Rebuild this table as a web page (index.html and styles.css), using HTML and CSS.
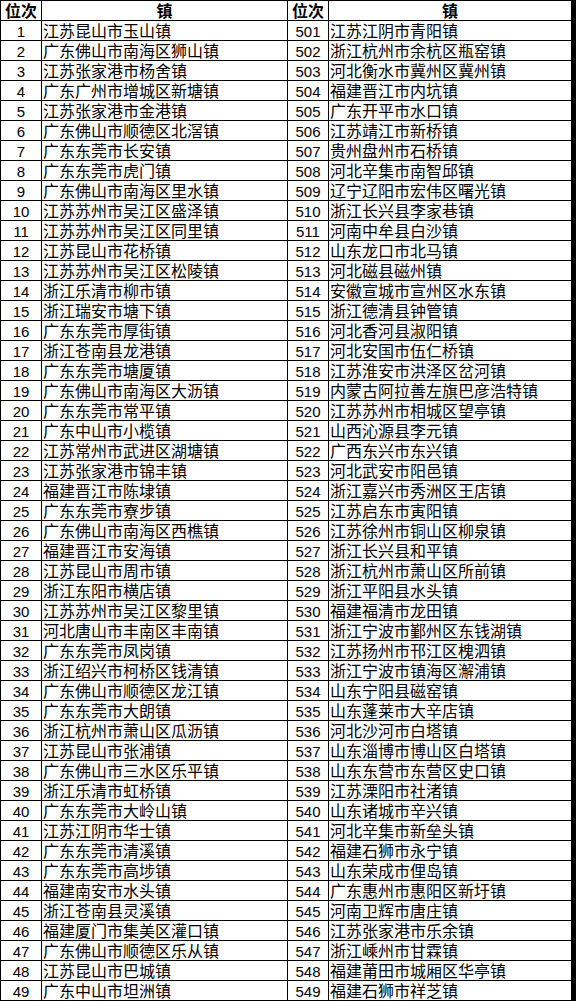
FILE: index.html
```html
<!DOCTYPE html>
<html lang="zh-CN">
<head>
<meta charset="utf-8">
<title>位次 镇</title>
<link rel="stylesheet" href="styles.css">
</head>
<body>
<div class="page">
<div class="sheet">
<div class="hd">位次</div><div class="hd">镇</div><div class="hd">位次</div><div class="hd">镇</div>
<div class="no">1</div><div class="tw">江苏昆山市玉山镇</div><div class="no">501</div><div class="tw">江苏江阴市青阳镇</div>
<div class="no">2</div><div class="tw">广东佛山市南海区狮山镇</div><div class="no">502</div><div class="tw">浙江杭州市余杭区瓶窑镇</div>
<div class="no">3</div><div class="tw">江苏张家港市杨舍镇</div><div class="no">503</div><div class="tw">河北衡水市冀州区冀州镇</div>
<div class="no">4</div><div class="tw">广东广州市增城区新塘镇</div><div class="no">504</div><div class="tw">福建晋江市内坑镇</div>
<div class="no">5</div><div class="tw">江苏张家港市金港镇</div><div class="no">505</div><div class="tw">广东开平市水口镇</div>
<div class="no">6</div><div class="tw">广东佛山市顺德区北滘镇</div><div class="no">506</div><div class="tw">江苏靖江市新桥镇</div>
<div class="no">7</div><div class="tw">广东东莞市长安镇</div><div class="no">507</div><div class="tw">贵州盘州市石桥镇</div>
<div class="no">8</div><div class="tw">广东东莞市虎门镇</div><div class="no">508</div><div class="tw">河北辛集市南智邱镇</div>
<div class="no">9</div><div class="tw">广东佛山市南海区里水镇</div><div class="no">509</div><div class="tw">辽宁辽阳市宏伟区曙光镇</div>
<div class="no">10</div><div class="tw">江苏苏州市吴江区盛泽镇</div><div class="no">510</div><div class="tw">浙江长兴县李家巷镇</div>
<div class="no">11</div><div class="tw">江苏苏州市吴江区同里镇</div><div class="no">511</div><div class="tw">河南中牟县白沙镇</div>
<div class="no">12</div><div class="tw">江苏昆山市花桥镇</div><div class="no">512</div><div class="tw">山东龙口市北马镇</div>
<div class="no">13</div><div class="tw">江苏苏州市吴江区松陵镇</div><div class="no">513</div><div class="tw">河北磁县磁州镇</div>
<div class="no">14</div><div class="tw">浙江乐清市柳市镇</div><div class="no">514</div><div class="tw">安徽宣城市宣州区水东镇</div>
<div class="no">15</div><div class="tw">浙江瑞安市塘下镇</div><div class="no">515</div><div class="tw">浙江德清县钟管镇</div>
<div class="no">16</div><div class="tw">广东东莞市厚街镇</div><div class="no">516</div><div class="tw">河北香河县淑阳镇</div>
<div class="no">17</div><div class="tw">浙江苍南县龙港镇</div><div class="no">517</div><div class="tw">河北安国市伍仁桥镇</div>
<div class="no">18</div><div class="tw">广东东莞市塘厦镇</div><div class="no">518</div><div class="tw">江苏淮安市洪泽区岔河镇</div>
<div class="no">19</div><div class="tw">广东佛山市南海区大沥镇</div><div class="no">519</div><div class="tw">内蒙古阿拉善左旗巴彦浩特镇</div>
<div class="no">20</div><div class="tw">广东东莞市常平镇</div><div class="no">520</div><div class="tw">江苏苏州市相城区望亭镇</div>
<div class="no">21</div><div class="tw">广东中山市小榄镇</div><div class="no">521</div><div class="tw">山西沁源县李元镇</div>
<div class="no">22</div><div class="tw">江苏常州市武进区湖塘镇</div><div class="no">522</div><div class="tw">广西东兴市东兴镇</div>
<div class="no">23</div><div class="tw">江苏张家港市锦丰镇</div><div class="no">523</div><div class="tw">河北武安市阳邑镇</div>
<div class="no">24</div><div class="tw">福建晋江市陈埭镇</div><div class="no">524</div><div class="tw">浙江嘉兴市秀洲区王店镇</div>
<div class="no">25</div><div class="tw">广东东莞市寮步镇</div><div class="no">525</div><div class="tw">江苏启东市寅阳镇</div>
<div class="no">26</div><div class="tw">广东佛山市南海区西樵镇</div><div class="no">526</div><div class="tw">江苏徐州市铜山区柳泉镇</div>
<div class="no">27</div><div class="tw">福建晋江市安海镇</div><div class="no">527</div><div class="tw">浙江长兴县和平镇</div>
<div class="no">28</div><div class="tw">江苏昆山市周市镇</div><div class="no">528</div><div class="tw">浙江杭州市萧山区所前镇</div>
<div class="no">29</div><div class="tw">浙江东阳市横店镇</div><div class="no">529</div><div class="tw">浙江平阳县水头镇</div>
<div class="no">30</div><div class="tw">江苏苏州市吴江区黎里镇</div><div class="no">530</div><div class="tw">福建福清市龙田镇</div>
<div class="no">31</div><div class="tw">河北唐山市丰南区丰南镇</div><div class="no">531</div><div class="tw">浙江宁波市鄞州区东钱湖镇</div>
<div class="no">32</div><div class="tw">广东东莞市凤岗镇</div><div class="no">532</div><div class="tw">江苏扬州市邗江区槐泗镇</div>
<div class="no">33</div><div class="tw">浙江绍兴市柯桥区钱清镇</div><div class="no">533</div><div class="tw">浙江宁波市镇海区澥浦镇</div>
<div class="no">34</div><div class="tw">广东佛山市顺德区龙江镇</div><div class="no">534</div><div class="tw">山东宁阳县磁窑镇</div>
<div class="no">35</div><div class="tw">广东东莞市大朗镇</div><div class="no">535</div><div class="tw">山东蓬莱市大辛店镇</div>
<div class="no">36</div><div class="tw">浙江杭州市萧山区瓜沥镇</div><div class="no">536</div><div class="tw">河北沙河市白塔镇</div>
<div class="no">37</div><div class="tw">江苏昆山市张浦镇</div><div class="no">537</div><div class="tw">山东淄博市博山区白塔镇</div>
<div class="no">38</div><div class="tw">广东佛山市三水区乐平镇</div><div class="no">538</div><div class="tw">山东东营市东营区史口镇</div>
<div class="no">39</div><div class="tw">浙江乐清市虹桥镇</div><div class="no">539</div><div class="tw">江苏溧阳市社渚镇</div>
<div class="no">40</div><div class="tw">广东东莞市大岭山镇</div><div class="no">540</div><div class="tw">山东诸城市辛兴镇</div>
<div class="no">41</div><div class="tw">江苏江阴市华士镇</div><div class="no">541</div><div class="tw">河北辛集市新垒头镇</div>
<div class="no">42</div><div class="tw">广东东莞市清溪镇</div><div class="no">542</div><div class="tw">福建石狮市永宁镇</div>
<div class="no">43</div><div class="tw">广东东莞市高埗镇</div><div class="no">543</div><div class="tw">山东荣成市俚岛镇</div>
<div class="no">44</div><div class="tw">福建南安市水头镇</div><div class="no">544</div><div class="tw">广东惠州市惠阳区新圩镇</div>
<div class="no">45</div><div class="tw">浙江苍南县灵溪镇</div><div class="no">545</div><div class="tw">河南卫辉市唐庄镇</div>
<div class="no">46</div><div class="tw">福建厦门市集美区灌口镇</div><div class="no">546</div><div class="tw">江苏张家港市乐余镇</div>
<div class="no">47</div><div class="tw">广东佛山市顺德区乐从镇</div><div class="no">547</div><div class="tw">浙江嵊州市甘霖镇</div>
<div class="no">48</div><div class="tw">江苏昆山市巴城镇</div><div class="no">548</div><div class="tw">福建莆田市城厢区华亭镇</div>
<div class="no">49</div><div class="tw">广东中山市坦洲镇</div><div class="no">549</div><div class="tw">福建石狮市祥芝镇</div>
</div>
<div class="edge"></div>
</div>
</body>
</html>
```

FILE: styles.css
```css
html, body {
  margin: 0;
  padding: 0;
  background: #fff;
}

.page {
  display: flex;
  width: 576px;
  height: 1001px;
}

.sheet {
  display: grid;
  grid-template-columns: 40px 245px 40px 242px;
  grid-auto-rows: 19px;
  gap: 1px;
  padding: 1px;
  background: #000;
  width: 572px;
  box-sizing: border-box;
  align-content: start;
}

.sheet > div {
  background: #fff;
  color: #000;
  white-space: nowrap;
}

.hd {
  font-family: "Noto Sans CJK SC", "Noto Sans", sans-serif;
  font-weight: 700;
  font-size: 16px;
  line-height: 19px;
  text-align: center;
}

.no {
  font-family: "Liberation Sans", Arial, sans-serif;
  font-size: 15px;
  line-height: 17px;
  padding-top: 2px;
  text-align: center;
}

.tw {
  font-family: "Noto Sans CJK SC", "Noto Sans", sans-serif;
  font-size: 16px;
  line-height: 19px;
  padding-left: 1px;
}

.edge {
  flex: 0 0 4px;
  background: #000;
}
```
